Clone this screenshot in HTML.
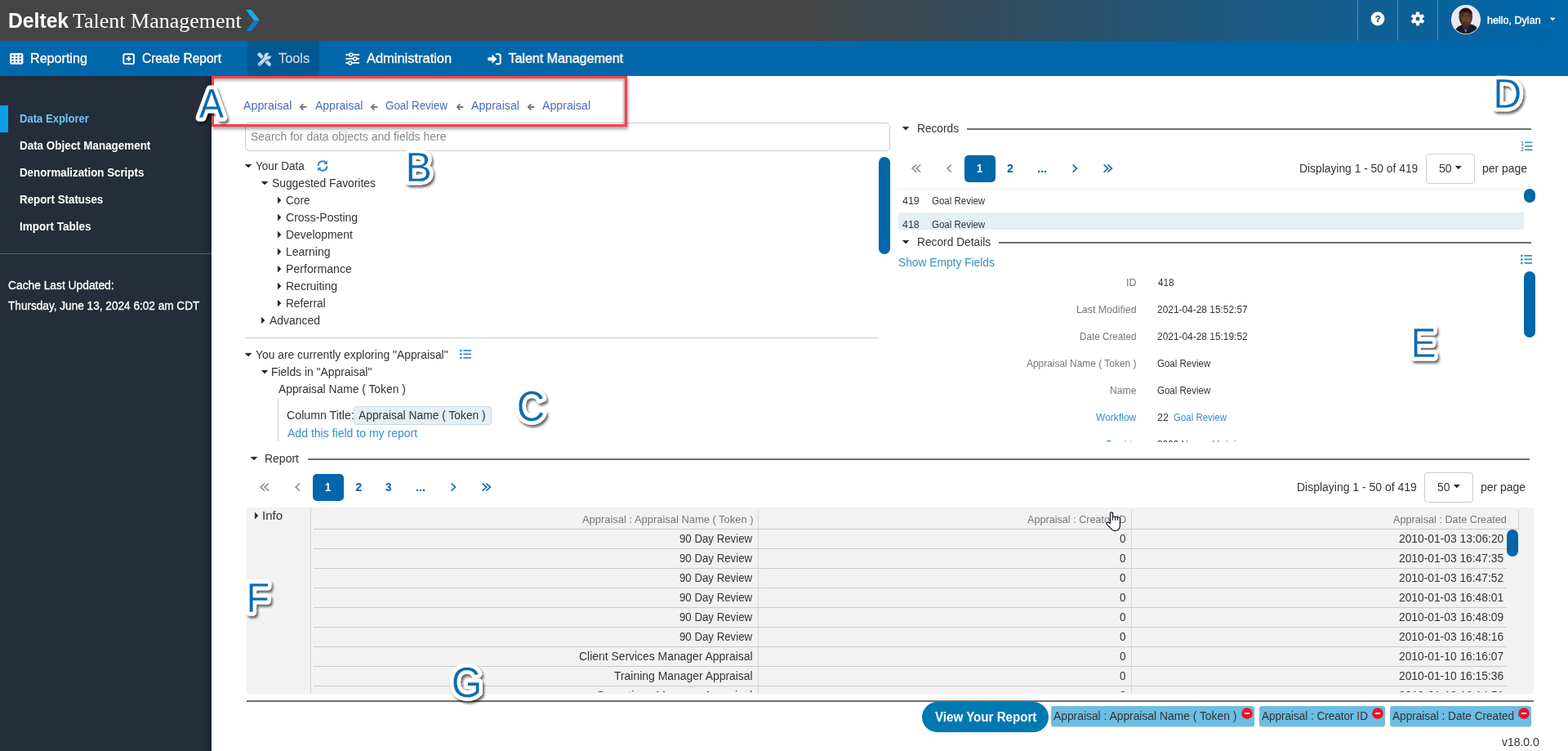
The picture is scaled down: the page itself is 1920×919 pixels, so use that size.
<!DOCTYPE html>
<html lang="en"><head><meta charset="utf-8"><title>Data Explorer</title>
<style>
html,body{margin:0;padding:0;background:#fff;}
body{width:1920px;height:919px;overflow:hidden;position:relative;font-family:'Liberation Sans',sans-serif;}
.b{position:absolute;display:block;box-sizing:border-box;}
.t{position:absolute;display:block;white-space:pre;transform-origin:0 50%;margin:0;padding:0;}
.clip{position:absolute;overflow:hidden;}
</style></head><body>

<header>
<div class="b" style="left:0px;top:0px;width:1920px;height:50px;background:linear-gradient(to right,#444 0,#444 51%,#0067ab 99%);"></div>
<span class="t" style="left:9.76px;top:6.10px;line-height:39px;font-size:26px;color:#fff;font-weight:700;font-family:'Liberation Sans', sans-serif;transform:scaleX(0.9494);">Deltek</span>
<span class="t" style="left:88.89px;top:6.90px;line-height:38px;font-size:25px;color:#fff;font-weight:400;font-family:'Liberation Serif', serif;transform:scaleX(1.0400);">Talent Management</span>
<svg class="b" style="left:301px;top:12px;" width="17" height="26" viewBox="0 0 17 26"><path d="M0 0 H7 L17 13 H10 Z" fill="#1ea8ee"/><path d="M10 13 H17 L7 26 H0 Z" fill="#1579c4"/></svg>
<div class="b" style="left:1662px;top:0px;width:1px;height:50px;background:rgba(255,255,255,.28);"></div>
<div class="b" style="left:1711px;top:0px;width:1px;height:50px;background:rgba(255,255,255,.28);"></div>
<div class="b" style="left:1760px;top:0px;width:1px;height:50px;background:rgba(255,255,255,.28);"></div>
<svg class="b" style="left:1678px;top:14px;" width="18" height="18" viewBox="0 0 18 18"><circle cx="9" cy="9" r="8.4" fill="#fff"/><text x="9" y="12.9" text-anchor="middle" font-family="'Liberation Sans',sans-serif" font-weight="700" font-size="11" fill="#17608f" stroke="#17608f" stroke-width="0.4">?</text></svg>
<svg class="b" style="left:1727px;top:14px;" width="18" height="18" viewBox="0 0 18 18"><g transform="translate(9 9)"><rect x="-2.1" y="-8.4" width="4.2" height="5" rx="0.8" fill="#fff" transform="rotate(0)"/><rect x="-2.1" y="-8.4" width="4.2" height="5" rx="0.8" fill="#fff" transform="rotate(60)"/><rect x="-2.1" y="-8.4" width="4.2" height="5" rx="0.8" fill="#fff" transform="rotate(120)"/><rect x="-2.1" y="-8.4" width="4.2" height="5" rx="0.8" fill="#fff" transform="rotate(180)"/><rect x="-2.1" y="-8.4" width="4.2" height="5" rx="0.8" fill="#fff" transform="rotate(240)"/><rect x="-2.1" y="-8.4" width="4.2" height="5" rx="0.8" fill="#fff" transform="rotate(300)"/><circle r="6" fill="#fff"/><circle r="2.5" fill="#145f98"/></g></svg>
<svg class="b" style="left:1777px;top:6px;" width="36" height="36" viewBox="0 0 36 36"><defs><clipPath id="avc"><circle cx="18" cy="18" r="17.2"/></clipPath></defs><circle cx="18" cy="18" r="18" fill="#f6f5fa"/><g clip-path="url(#avc)"><rect width="36" height="36" fill="#e9e7f0"/><path d="M4 36 C4.5 29 8 26 13 24.5 L18 30 L24 23.5 C30 25 33.5 28 34 36 Z" fill="#19191d"/><path d="M14.4 25.6 L17.6 34.5 L22.4 24.8 L20 30.4 L17.2 30.4 Z" fill="#5b84b3"/><path d="M12.6 20 H23.4 V25.4 L18 30.6 L12.6 25.6 Z" fill="#3a221b"/><ellipse cx="17.7" cy="14.6" rx="8.3" ry="11.2" fill="#4b2e25"/><path d="M9.5 12.6 C8.6 1.2 26.8 1.2 25.9 12.6 C24.6 7.2 10.8 7.2 9.5 12.6Z" fill="#1c1412"/><ellipse cx="18.4" cy="16.6" rx="5.6" ry="6.8" fill="#68412f"/><path d="M14.6 21.4 Q18 23.2 21.6 21.4" stroke="#2c1712" stroke-width="0.9" fill="none"/><path d="M13.4 13.2 H16.6 M19.6 13.2 H22.8" stroke="#22140f" stroke-width="1" fill="none"/></g></svg>
<span class="t" style="left:1821.41px;top:14.60px;line-height:20px;font-size:13.5px;color:#fff;font-weight:400;font-family:'Liberation Sans', sans-serif;transform:scaleX(0.9304);-webkit-text-stroke:0.4px #fff;">hello, Dylan</span>
<svg class="b" style="left:1896.6px;top:21.2px;" width="9" height="6" viewBox="0 0 9 6"><path d="M0.8 0.8 H7.6 L4.2 4.4 Z" fill="#fff"/></svg>
</header>
<nav>
<div class="b" style="left:0px;top:50px;width:1920px;height:43px;background:#0067ab;"></div>
<div class="b" style="left:303px;top:50px;width:88px;height:43px;background:#005893;"></div>
<svg class="b" style="left:12px;top:65.2px;" width="17" height="14" viewBox="0 0 17 14"><rect x="0" y="0" width="16.4" height="13.8" rx="1.8" fill="#fff"/><rect x="2.3" y="2.4" width="2.5" height="1.9" fill="#0067ab"/><rect x="6.9" y="2.4" width="2.5" height="1.9" fill="#0067ab"/><rect x="11.5" y="2.4" width="2.5" height="1.9" fill="#0067ab"/><rect x="2.3" y="5.9" width="2.5" height="1.9" fill="#0067ab"/><rect x="6.9" y="5.9" width="2.5" height="1.9" fill="#0067ab"/><rect x="11.5" y="5.9" width="2.5" height="1.9" fill="#0067ab"/><rect x="2.3" y="9.5" width="2.5" height="1.9" fill="#0067ab"/><rect x="6.9" y="9.5" width="2.5" height="1.9" fill="#0067ab"/><rect x="11.5" y="9.5" width="2.5" height="1.9" fill="#0067ab"/></svg>
<span class="t" style="left:36.94px;top:59.55px;line-height:24px;font-size:16px;color:#fff;font-weight:400;font-family:'Liberation Sans', sans-serif;transform:scaleX(1.0073);-webkit-text-stroke:0.35px #fff;text-shadow:0 1px 1px rgba(0,0,0,.35);">Reporting</span>
<svg class="b" style="left:150px;top:65px;" width="16" height="15" viewBox="0 0 16 15"><rect x="1.3" y="1.2" width="12.6" height="11.8" rx="1.6" fill="none" stroke="#fff" stroke-width="1.9"/><path d="M7.6 4.1 V10.1 M4.6 7.1 H10.6" stroke="#fff" stroke-width="2" fill="none"/></svg>
<span class="t" style="left:173.98px;top:59.55px;line-height:24px;font-size:16px;color:#fff;font-weight:400;font-family:'Liberation Sans', sans-serif;transform:scaleX(0.9644);-webkit-text-stroke:0.35px #fff;text-shadow:0 1px 1px rgba(0,0,0,.35);">Create Report</span>
<svg class="b" style="left:314.6px;top:63.6px;" width="18" height="17.4" viewBox="0 0 18 17.4"><path d="M2.6 2.6 L14.8 14.8" stroke="#c3d6e6" stroke-width="4.4" stroke-linecap="round" fill="none"/><path d="M2.9 14.6 L11.5 6" stroke="#005893" stroke-width="6.2" stroke-linecap="round" fill="none"/><circle cx="12.5" cy="4.8" r="5.2" fill="#005893"/><path d="M2.9 14.6 L11 6.5" stroke="#c3d6e6" stroke-width="4.2" stroke-linecap="round" fill="none"/><circle cx="12.5" cy="4.8" r="4.3" fill="#c3d6e6"/><path d="M12.1 5.2 L15.4 -0.6 L18.6 3.2 Z" fill="#005893"/><circle cx="3" cy="14.5" r="0.8" fill="#005893"/></svg>
<span class="t" style="left:341.24px;top:59.55px;line-height:24px;font-size:16px;color:#c3d6e6;font-weight:400;font-family:'Liberation Sans', sans-serif;transform:scaleX(1.0224);-webkit-text-stroke:0.35px #c3d6e6;text-shadow:0 1px 1px rgba(0,0,0,.35);">Tools</span>
<svg class="b" style="left:423px;top:63.8px;" width="18" height="16.5" viewBox="0 0 18 16.5"><g stroke="#fff" stroke-width="1.9" fill="none"><path d="M0.3 2.9 H17 M0.3 7.9 H17 M0.3 12.9 H17"/></g><circle cx="6.7" cy="2.9" r="2" fill="#0067ab" stroke="#fff" stroke-width="1.5"/><circle cx="11.7" cy="7.9" r="2" fill="#0067ab" stroke="#fff" stroke-width="1.5"/><circle cx="5.7" cy="12.9" r="2" fill="#0067ab" stroke="#fff" stroke-width="1.5"/></svg>
<span class="t" style="left:448.80px;top:59.55px;line-height:24px;font-size:16px;color:#fff;font-weight:400;font-family:'Liberation Sans', sans-serif;transform:scaleX(1.0271);-webkit-text-stroke:0.35px #fff;text-shadow:0 1px 1px rgba(0,0,0,.35);">Administration</span>
<svg class="b" style="left:596.6px;top:64.6px;" width="17" height="15" viewBox="0 0 17 15"><path d="M0.4 5.2 H5.4 V1.6 L11.6 7.2 L5.4 12.8 V9.2 H0.4 Z" fill="#fff"/><path d="M10.8 1.2 H13.4 Q15.7 1.2 15.7 3.5 V10.9 Q15.7 13.2 13.4 13.2 H10.8" fill="none" stroke="#fff" stroke-width="2" stroke-linecap="round"/></svg>
<span class="t" style="left:622.45px;top:59.55px;line-height:24px;font-size:16px;color:#fff;font-weight:400;font-family:'Liberation Sans', sans-serif;transform:scaleX(1.0000);-webkit-text-stroke:0.35px #fff;text-shadow:0 1px 1px rgba(0,0,0,.35);">Talent Management</span>
</nav>
<aside>
<div class="b" style="left:0px;top:93px;width:259px;height:826px;background:linear-gradient(to right,#252d3a 0,#252d3a 96%,#1d242f 100%);"></div>
<div class="b" style="left:0px;top:129px;width:10px;height:33px;background:#0d9ee8;"></div>
<span class="t" style="left:23.98px;top:135.05px;line-height:21px;font-size:14px;color:#6cc3f5;font-weight:700;font-family:'Liberation Sans', sans-serif;transform:scaleX(0.9326);">Data Explorer</span>
<span class="t" style="left:23.96px;top:167.70px;line-height:21px;font-size:14px;color:#fff;font-weight:700;font-family:'Liberation Sans', sans-serif;transform:scaleX(0.9584);">Data Object Management</span>
<span class="t" style="left:23.97px;top:200.60px;line-height:21px;font-size:14px;color:#fff;font-weight:700;font-family:'Liberation Sans', sans-serif;transform:scaleX(0.9502);">Denormalization Scripts</span>
<span class="t" style="left:23.87px;top:233.70px;line-height:21px;font-size:14px;color:#fff;font-weight:700;font-family:'Liberation Sans', sans-serif;transform:scaleX(0.9526);">Report Statuses</span>
<span class="t" style="left:23.86px;top:266.70px;line-height:21px;font-size:14px;color:#fff;font-weight:700;font-family:'Liberation Sans', sans-serif;transform:scaleX(0.9640);">Import Tables</span>
<div class="b" style="left:0px;top:310px;width:259px;height:1px;background:#5b626d;"></div>
<span class="t" style="left:9.55px;top:338.90px;line-height:21px;font-size:14px;color:#fff;font-weight:400;font-family:'Liberation Sans', sans-serif;transform:scaleX(0.9850);-webkit-text-stroke:0.3px #fff;">Cache Last Updated:</span>
<span class="t" style="left:9.99px;top:363.50px;line-height:21px;font-size:14px;color:#fff;font-weight:400;font-family:'Liberation Sans', sans-serif;transform:scaleX(0.9725);-webkit-text-stroke:0.3px #fff;">Thursday, June 13, 2024 6:02 am CDT</span>
</aside>
<main>
<div class="b" style="left:300px;top:150px;width:790px;height:35px;border:1px solid #c4cbd2;border-radius:5px;background:#fff;"></div>
<span class="t" style="left:306.86px;top:156.85px;line-height:21px;font-size:14px;color:#8a8a8a;font-weight:400;font-family:'Liberation Sans', sans-serif;transform:scaleX(0.9988);">Search for data objects and fields here</span>
<div class="b" style="left:259px;top:93px;width:509px;height:62px;border:3px solid #f94045;box-shadow:1px 3px 4px rgba(0,0,0,.36), inset -2px 3px 3px rgba(0,0,0,.27);"></div>
<span class="t" style="left:298.10px;top:118.70px;line-height:21px;font-size:14px;color:#4a6cb8;font-weight:400;font-family:'Liberation Sans', sans-serif;transform:scaleX(1.0167);">Appraisal</span>
<span class="t" style="left:385.50px;top:118.70px;line-height:21px;font-size:14px;color:#4a6cb8;font-weight:400;font-family:'Liberation Sans', sans-serif;transform:scaleX(0.9993);">Appraisal</span>
<span class="t" style="left:472.07px;top:118.70px;line-height:21px;font-size:14px;color:#4a6cb8;font-weight:400;font-family:'Liberation Sans', sans-serif;transform:scaleX(0.9559);">Goal Review</span>
<span class="t" style="left:577.10px;top:118.70px;line-height:21px;font-size:14px;color:#4a6cb8;font-weight:400;font-family:'Liberation Sans', sans-serif;transform:scaleX(1.0097);">Appraisal</span>
<span class="t" style="left:664.10px;top:118.70px;line-height:21px;font-size:14px;color:#4a6cb8;font-weight:400;font-family:'Liberation Sans', sans-serif;transform:scaleX(1.0132);">Appraisal</span>
<svg class="b" style="left:366px;top:125.80000000000001px;" width="11" height="10" viewBox="0 0 11 10"><path d="M4.9 1.9 L1.9 5 L4.9 8.1 M2.2 5 H8.6" fill="none" stroke="#777" stroke-width="1.9" stroke-linecap="round" stroke-linejoin="round"/></svg>
<svg class="b" style="left:453.4px;top:125.80000000000001px;" width="11" height="10" viewBox="0 0 11 10"><path d="M4.9 1.9 L1.9 5 L4.9 8.1 M2.2 5 H8.6" fill="none" stroke="#777" stroke-width="1.9" stroke-linecap="round" stroke-linejoin="round"/></svg>
<svg class="b" style="left:557.8px;top:125.80000000000001px;" width="11" height="10" viewBox="0 0 11 10"><path d="M4.9 1.9 L1.9 5 L4.9 8.1 M2.2 5 H8.6" fill="none" stroke="#777" stroke-width="1.9" stroke-linecap="round" stroke-linejoin="round"/></svg>
<svg class="b" style="left:644.7px;top:125.80000000000001px;" width="11" height="10" viewBox="0 0 11 10"><path d="M4.9 1.9 L1.9 5 L4.9 8.1 M2.2 5 H8.6" fill="none" stroke="#777" stroke-width="1.9" stroke-linecap="round" stroke-linejoin="round"/></svg>
<svg class="b" style="left:299px;top:200.04999999999998px;" width="10.2" height="6.3" viewBox="0 0 10.2 6.3"><path d="M1.3 1.3 H8.899999999999999 L5.1 5.0 Z" fill="#222" stroke="#222" stroke-width="0.6" stroke-linejoin="round"/></svg>
<span class="t" style="left:313.39px;top:192.80px;line-height:21px;font-size:14px;color:#333;font-weight:400;font-family:'Liberation Sans', sans-serif;transform:scaleX(0.9689);">Your Data</span>
<svg class="b" style="left:388px;top:196px;" width="14" height="14" viewBox="0 0 14 14"><g fill="none" stroke="#2d8cc6" stroke-width="1.9" stroke-linecap="round"><path d="M1.6 6 A5.4 5.4 0 0 1 11.2 3.4"/><path d="M12.4 8 A5.4 5.4 0 0 1 2.8 10.6"/></g><path d="M12.8 0.6 V5 H8.4 Z" fill="#2d8cc6"/><path d="M1.2 13.4 V9 H5.6 Z" fill="#2d8cc6"/></svg>
<svg class="b" style="left:319px;top:221.04999999999998px;" width="10.2" height="6.3" viewBox="0 0 10.2 6.3"><path d="M1.3 1.3 H8.899999999999999 L5.1 5.0 Z" fill="#222" stroke="#222" stroke-width="0.6" stroke-linejoin="round"/></svg>
<span class="t" style="left:332.87px;top:213.80px;line-height:21px;font-size:14px;color:#333;font-weight:400;font-family:'Liberation Sans', sans-serif;transform:scaleX(0.9880);">Suggested Favorites</span>
<svg class="b" style="left:338.9px;top:239.9px;" width="6.3" height="10.2" viewBox="0 0 6.3 10.2"><path d="M1.3 1.3 V8.899999999999999 L5.0 5.1 Z" fill="#222" stroke="#222" stroke-width="0.6" stroke-linejoin="round"/></svg>
<span class="t" style="left:350.06px;top:234.80px;line-height:21px;font-size:14px;color:#333;font-weight:400;font-family:'Liberation Sans', sans-serif;transform:scaleX(0.9718);">Core</span>
<svg class="b" style="left:338.9px;top:260.9px;" width="6.3" height="10.2" viewBox="0 0 6.3 10.2"><path d="M1.3 1.3 V8.899999999999999 L5.0 5.1 Z" fill="#222" stroke="#222" stroke-width="0.6" stroke-linejoin="round"/></svg>
<span class="t" style="left:350.04px;top:255.80px;line-height:21px;font-size:14px;color:#333;font-weight:400;font-family:'Liberation Sans', sans-serif;transform:scaleX(1.0026);">Cross-Posting</span>
<svg class="b" style="left:338.9px;top:281.9px;" width="6.3" height="10.2" viewBox="0 0 6.3 10.2"><path d="M1.3 1.3 V8.899999999999999 L5.0 5.1 Z" fill="#222" stroke="#222" stroke-width="0.6" stroke-linejoin="round"/></svg>
<span class="t" style="left:349.61px;top:276.80px;line-height:21px;font-size:14px;color:#333;font-weight:400;font-family:'Liberation Sans', sans-serif;transform:scaleX(0.9921);">Development</span>
<svg class="b" style="left:338.9px;top:302.9px;" width="6.3" height="10.2" viewBox="0 0 6.3 10.2"><path d="M1.3 1.3 V8.899999999999999 L5.0 5.1 Z" fill="#222" stroke="#222" stroke-width="0.6" stroke-linejoin="round"/></svg>
<span class="t" style="left:349.61px;top:297.80px;line-height:21px;font-size:14px;color:#333;font-weight:400;font-family:'Liberation Sans', sans-serif;transform:scaleX(1.0006);">Learning</span>
<svg class="b" style="left:338.9px;top:323.9px;" width="6.3" height="10.2" viewBox="0 0 6.3 10.2"><path d="M1.3 1.3 V8.899999999999999 L5.0 5.1 Z" fill="#222" stroke="#222" stroke-width="0.6" stroke-linejoin="round"/></svg>
<span class="t" style="left:349.60px;top:318.80px;line-height:21px;font-size:14px;color:#333;font-weight:400;font-family:'Liberation Sans', sans-serif;transform:scaleX(1.0081);">Performance</span>
<svg class="b" style="left:338.9px;top:344.9px;" width="6.3" height="10.2" viewBox="0 0 6.3 10.2"><path d="M1.3 1.3 V8.899999999999999 L5.0 5.1 Z" fill="#222" stroke="#222" stroke-width="0.6" stroke-linejoin="round"/></svg>
<span class="t" style="left:349.61px;top:339.80px;line-height:21px;font-size:14px;color:#333;font-weight:400;font-family:'Liberation Sans', sans-serif;transform:scaleX(0.9996);">Recruiting</span>
<svg class="b" style="left:338.9px;top:365.9px;" width="6.3" height="10.2" viewBox="0 0 6.3 10.2"><path d="M1.3 1.3 V8.899999999999999 L5.0 5.1 Z" fill="#222" stroke="#222" stroke-width="0.6" stroke-linejoin="round"/></svg>
<span class="t" style="left:349.63px;top:360.80px;line-height:21px;font-size:14px;color:#333;font-weight:400;font-family:'Liberation Sans', sans-serif;transform:scaleX(0.9754);">Referral</span>
<svg class="b" style="left:318.9px;top:386.9px;" width="6.3" height="10.2" viewBox="0 0 6.3 10.2"><path d="M1.3 1.3 V8.899999999999999 L5.0 5.1 Z" fill="#222" stroke="#222" stroke-width="0.6" stroke-linejoin="round"/></svg>
<span class="t" style="left:330.30px;top:381.80px;line-height:21px;font-size:14px;color:#333;font-weight:400;font-family:'Liberation Sans', sans-serif;transform:scaleX(0.9938);">Advanced</span>
<div class="b" style="left:300px;top:413px;width:776px;height:1px;background:#ccc;"></div>
<svg class="b" style="left:299px;top:431.05px;" width="10.2" height="6.3" viewBox="0 0 10.2 6.3"><path d="M1.3 1.3 H8.899999999999999 L5.1 5.0 Z" fill="#222" stroke="#222" stroke-width="0.6" stroke-linejoin="round"/></svg>
<span class="t" style="left:313.28px;top:423.80px;line-height:21px;font-size:14px;color:#333;font-weight:400;font-family:'Liberation Sans', sans-serif;transform:scaleX(0.9890);">You are currently exploring "Appraisal"</span>
<svg class="b" style="left:562.6px;top:427.3px;" width="15" height="13" viewBox="0 0 15 13"><rect x="0" y="0.7" width="2.5" height="2.5" rx="0.5" fill="#388fc8"/><rect x="4.2" y="1.1" width="10" height="1.7" rx="0.8" fill="#388fc8"/><rect x="0" y="5.2" width="2.5" height="2.5" rx="0.5" fill="#388fc8"/><rect x="4.2" y="5.6" width="10" height="1.7" rx="0.8" fill="#388fc8"/><rect x="0" y="9.7" width="2.5" height="2.5" rx="0.5" fill="#388fc8"/><rect x="4.2" y="10.1" width="10" height="1.7" rx="0.8" fill="#388fc8"/></svg>
<svg class="b" style="left:319px;top:452.05px;" width="10.2" height="6.3" viewBox="0 0 10.2 6.3"><path d="M1.3 1.3 H8.899999999999999 L5.1 5.0 Z" fill="#222" stroke="#222" stroke-width="0.6" stroke-linejoin="round"/></svg>
<span class="t" style="left:331.91px;top:444.80px;line-height:21px;font-size:14px;color:#333;font-weight:400;font-family:'Liberation Sans', sans-serif;transform:scaleX(0.9924);">Fields in "Appraisal"</span>
<span class="t" style="left:340.50px;top:465.80px;line-height:21px;font-size:14px;color:#333;font-weight:400;font-family:'Liberation Sans', sans-serif;transform:scaleX(0.9880);">Appraisal Name ( Token )</span>
<div class="b" style="left:340px;top:487px;width:1px;height:53px;background:#ccc;"></div>
<span class="t" style="left:350.73px;top:497.80px;line-height:21px;font-size:14px;color:#333;font-weight:400;font-family:'Liberation Sans', sans-serif;transform:scaleX(1.0134);">Column Title:</span>
<div class="b" style="left:433px;top:497px;width:169px;height:23px;background:#e4eff7;border:1px solid #c9d8e3;border-radius:3px;"></div>
<span class="t" style="left:439.40px;top:497.80px;line-height:21px;font-size:14px;color:#333;font-weight:400;font-family:'Liberation Sans', sans-serif;transform:scaleX(0.9875);">Appraisal Name ( Token )</span>
<span class="t" style="left:352.40px;top:519.80px;line-height:21px;font-size:14px;color:#388fc8;font-weight:400;font-family:'Liberation Sans', sans-serif;transform:scaleX(1.0029);">Add this field to my report</span>
<div class="b" style="left:1076px;top:192px;width:14px;height:119px;background:#0067ab;border-radius:7px;"></div>
<svg class="b" style="left:1103.8px;top:153.95px;" width="10.2" height="6.3" viewBox="0 0 10.2 6.3"><path d="M1.3 1.3 H8.899999999999999 L5.1 5.0 Z" fill="#222" stroke="#222" stroke-width="0.6" stroke-linejoin="round"/></svg>
<span class="t" style="left:1122.63px;top:146.90px;line-height:21px;font-size:14px;color:#333;font-weight:400;font-family:'Liberation Sans', sans-serif;transform:scaleX(0.9779);">Records</span>
<div class="b" style="left:1184px;top:157px;width:691px;height:2px;background:#6e6e6e;"></div>
<svg class="b" style="left:1862px;top:172.2px;" width="15" height="13" viewBox="0 0 15 13"><rect x="5" y="1.4000000000000001" width="9.6" height="1.7" rx="0.8" fill="#388fc8"/><rect x="5" y="5.999999999999999" width="9.6" height="1.7" rx="0.8" fill="#388fc8"/><rect x="5" y="10.6" width="9.6" height="1.7" rx="0.8" fill="#388fc8"/><text x="0" y="5.6" font-family="'Liberation Sans',sans-serif" font-weight="700" font-size="7" fill="#388fc8">1</text><text x="0" y="12.6" font-family="'Liberation Sans',sans-serif" font-weight="700" font-size="7" fill="#388fc8">2</text></svg>
<svg class="b" style="left:1113.8px;top:198.70000000000002px;" width="15.700000000000045" height="14.2" viewBox="0 0 15.700000000000045 14.2"><path d="M8.20 2.48 L3.10 7.10 L8.20 11.72 M13.10 2.48 L8.00 7.10 L13.10 11.72" fill="none" stroke="#8f8f8f" stroke-width="1.6" stroke-linecap="butt" stroke-linejoin="miter"/></svg>
<svg class="b" style="left:1156.8px;top:198.70000000000002px;" width="10.5" height="14.2" viewBox="0 0 10.5 14.2"><path d="M7.90 2.48 L3.10 7.10 L7.90 11.72" fill="none" stroke="#8f8f8f" stroke-width="1.6" stroke-linecap="butt" stroke-linejoin="miter"/></svg>
<div class="b" style="left:1181.0px;top:190.0px;width:38px;height:33px;background:#0067ab;border-radius:5px;"></div>
<span class="t" style="left:1196.01px;top:195.80px;line-height:21px;font-size:14px;color:#fff;font-weight:700;font-family:'Liberation Sans', sans-serif;transform:scaleX(0.8990);">1</span>
<span class="t" style="left:1233.06px;top:195.80px;line-height:21px;font-size:14px;color:#0067ab;font-weight:700;font-family:'Liberation Sans', sans-serif;transform:scaleX(1.0000);">2</span>
<span class="t" style="left:1269.89px;top:195.80px;line-height:21px;font-size:14px;color:#0067ab;font-weight:700;font-family:'Liberation Sans', sans-serif;transform:scaleX(1.0435);">...</span>
<svg class="b" style="left:1310.7px;top:198.70000000000002px;" width="10.5" height="14.2" viewBox="0 0 10.5 14.2"><path d="M2.60 2.48 L7.40 7.10 L2.60 11.72" fill="none" stroke="#0067ab" stroke-width="1.6" stroke-linecap="butt" stroke-linejoin="miter"/></svg>
<svg class="b" style="left:1348.7px;top:198.70000000000002px;" width="15.5" height="14.2" viewBox="0 0 15.5 14.2"><path d="M2.60 2.48 L7.70 7.10 L2.60 11.72 M7.30 2.48 L12.40 7.10 L7.30 11.72" fill="none" stroke="#0067ab" stroke-width="1.6" stroke-linecap="butt" stroke-linejoin="miter"/></svg>
<span class="t" style="left:1591.32px;top:195.80px;line-height:21px;font-size:14px;color:#333;font-weight:400;font-family:'Liberation Sans', sans-serif;transform:scaleX(0.9876);">Displaying 1 - 50 of 419</span>
<div class="b" style="left:1746px;top:188px;width:60px;height:37px;border:1px solid #ccc;border-radius:4px;background:#fff;"></div>
<span class="t" style="left:1761.66px;top:195.80px;line-height:21px;font-size:14px;color:#333;font-weight:400;font-family:'Liberation Sans', sans-serif;transform:scaleX(1.0077);">50</span>
<svg class="b" style="left:1781.2px;top:201.5px;" width="9.6" height="6.2" viewBox="0 0 9.6 6.2"><path d="M1.3 1.3 H8.299999999999999 L4.8 4.9 Z" fill="#222" stroke="#222" stroke-width="0.6" stroke-linejoin="round"/></svg>
<span class="t" style="left:1815.13px;top:195.80px;line-height:21px;font-size:14px;color:#333;font-weight:400;font-family:'Liberation Sans', sans-serif;transform:scaleX(0.9977);">per page</span>
<div class="b" style="left:1100px;top:231px;width:766px;height:1px;background:#eee;"></div>
<span class="t" style="left:1104.74px;top:236.70px;line-height:18px;font-size:12px;color:#333;font-weight:400;font-family:'Liberation Sans', sans-serif;transform:scaleX(1.0339);">419</span>
<span class="t" style="left:1141.03px;top:236.70px;line-height:18px;font-size:12px;color:#333;font-weight:400;font-family:'Liberation Sans', sans-serif;transform:scaleX(0.9576);">Goal Review</span>
<div class="b" style="left:1100px;top:260px;width:766px;height:21px;background:#e4eff6;"></div>
<span class="t" style="left:1104.74px;top:265.50px;line-height:18px;font-size:12px;color:#333;font-weight:400;font-family:'Liberation Sans', sans-serif;transform:scaleX(1.0312);">418</span>
<span class="t" style="left:1141.03px;top:265.50px;line-height:18px;font-size:12px;color:#333;font-weight:400;font-family:'Liberation Sans', sans-serif;transform:scaleX(0.9576);">Goal Review</span>
<div class="b" style="left:1100px;top:281px;width:780px;height:8px;background:#fff;"></div>
<div class="b" style="left:1866px;top:231px;width:14px;height:17px;background:#0067ab;border-radius:7px;"></div>
<svg class="b" style="left:1103.8px;top:292.95000000000005px;" width="10.2" height="6.3" viewBox="0 0 10.2 6.3"><path d="M1.3 1.3 H8.899999999999999 L5.1 5.0 Z" fill="#222" stroke="#222" stroke-width="0.6" stroke-linejoin="round"/></svg>
<span class="t" style="left:1122.63px;top:285.80px;line-height:21px;font-size:14px;color:#333;font-weight:400;font-family:'Liberation Sans', sans-serif;transform:scaleX(0.9825);">Record Details</span>
<div class="b" style="left:1223px;top:296px;width:652px;height:2px;background:#6e6e6e;"></div>
<span class="t" style="left:1099.87px;top:310.70px;line-height:21px;font-size:14px;color:#388fc8;font-weight:400;font-family:'Liberation Sans', sans-serif;transform:scaleX(0.9836);">Show Empty Fields</span>
<svg class="b" style="left:1862.2px;top:311.2px;" width="15" height="13" viewBox="0 0 15 13"><rect x="0" y="0.7" width="2.5" height="2.5" rx="0.5" fill="#388fc8"/><rect x="4.2" y="1.1" width="10" height="1.7" rx="0.8" fill="#388fc8"/><rect x="0" y="5.2" width="2.5" height="2.5" rx="0.5" fill="#388fc8"/><rect x="4.2" y="5.6" width="10" height="1.7" rx="0.8" fill="#388fc8"/><rect x="0" y="9.7" width="2.5" height="2.5" rx="0.5" fill="#388fc8"/><rect x="4.2" y="10.1" width="10" height="1.7" rx="0.8" fill="#388fc8"/></svg>
<div class="b" style="left:1866px;top:332px;width:14px;height:81px;background:#0067ab;border-radius:7px;"></div>
<span class="t" style="left:1379.05px;top:336.90px;line-height:18px;font-size:12px;color:#777;font-weight:400;font-family:'Liberation Sans', sans-serif;transform:scaleX(1.0451);">ID</span>
<span class="t" style="left:1418.36px;top:336.90px;line-height:18px;font-size:12px;color:#333;font-weight:400;font-family:'Liberation Sans', sans-serif;transform:scaleX(0.9773);">418</span>
<span class="t" style="left:1317.62px;top:369.90px;line-height:18px;font-size:12px;color:#777;font-weight:400;font-family:'Liberation Sans', sans-serif;transform:scaleX(1.0301);">Last Modified</span>
<span class="t" style="left:1417.00px;top:369.90px;line-height:18px;font-size:12px;color:#333;font-weight:400;font-family:'Liberation Sans', sans-serif;transform:scaleX(0.9932);">2021-04-28 15:52:57</span>
<span class="t" style="left:1322.37px;top:402.90px;line-height:18px;font-size:12px;color:#777;font-weight:400;font-family:'Liberation Sans', sans-serif;transform:scaleX(0.9742);">Date Created</span>
<span class="t" style="left:1417.00px;top:402.90px;line-height:18px;font-size:12px;color:#333;font-weight:400;font-family:'Liberation Sans', sans-serif;transform:scaleX(0.9932);">2021-04-28 15:19:52</span>
<span class="t" style="left:1257.00px;top:435.90px;line-height:18px;font-size:12px;color:#777;font-weight:400;font-family:'Liberation Sans', sans-serif;transform:scaleX(0.9949);">Appraisal Name ( Token )</span>
<span class="t" style="left:1417.02px;top:435.90px;line-height:18px;font-size:12px;color:#333;font-weight:400;font-family:'Liberation Sans', sans-serif;transform:scaleX(0.9591);">Goal Review</span>
<span class="t" style="left:1359.04px;top:468.90px;line-height:18px;font-size:12px;color:#777;font-weight:400;font-family:'Liberation Sans', sans-serif;transform:scaleX(1.0152);">Name</span>
<span class="t" style="left:1417.02px;top:468.90px;line-height:18px;font-size:12px;color:#333;font-weight:400;font-family:'Liberation Sans', sans-serif;transform:scaleX(0.9591);">Goal Review</span>
<span class="t" style="left:1341.65px;top:501.90px;line-height:18px;font-size:12px;color:#388fc8;font-weight:400;font-family:'Liberation Sans', sans-serif;transform:scaleX(1.0040);">Workflow</span>
<span class="t" style="left:1417.07px;top:501.90px;line-height:18px;font-size:12px;color:#333;font-weight:400;font-family:'Liberation Sans', sans-serif;transform:scaleX(1.0514);">22</span>
<span class="t" style="left:1436.93px;top:501.90px;line-height:18px;font-size:12px;color:#388fc8;font-weight:400;font-family:'Liberation Sans', sans-serif;transform:scaleX(0.9546);">Goal Review</span>
<div class="clip" style="left:1100px;top:530px;width:760px;height:11px;">
<span class="t" style="left:254.81px;top:4.90px;line-height:18px;font-size:12px;color:#388fc8;font-weight:400;font-family:'Liberation Sans', sans-serif;transform:scaleX(0.7513);">Template</span>
<span class="t" style="left:317.16px;top:4.90px;line-height:18px;font-size:12px;color:#333;font-weight:400;font-family:'Liberation Sans', sans-serif;transform:scaleX(0.9837);">3000</span>
<span class="t" style="left:345.97px;top:4.90px;line-height:18px;font-size:12px;color:#388fc8;font-weight:400;font-family:'Liberation Sans', sans-serif;transform:scaleX(1.0793);">Name Helein</span>
</div>
<svg class="b" style="left:306px;top:558.0500000000001px;" width="10.2" height="6.3" viewBox="0 0 10.2 6.3"><path d="M1.3 1.3 H8.899999999999999 L5.1 5.0 Z" fill="#222" stroke="#222" stroke-width="0.6" stroke-linejoin="round"/></svg>
<span class="t" style="left:324.21px;top:550.80px;line-height:21px;font-size:14px;color:#333;font-weight:400;font-family:'Liberation Sans', sans-serif;transform:scaleX(0.9982);">Report</span>
<div class="b" style="left:377px;top:561px;width:1496px;height:2px;background:#6e6e6e;"></div>
<svg class="b" style="left:315.9px;top:588.6999999999999px;" width="15.699999999999989" height="14.2" viewBox="0 0 15.699999999999989 14.2"><path d="M8.20 2.48 L3.10 7.10 L8.20 11.72 M13.10 2.48 L8.00 7.10 L13.10 11.72" fill="none" stroke="#8f8f8f" stroke-width="1.6" stroke-linecap="butt" stroke-linejoin="miter"/></svg>
<svg class="b" style="left:358.9px;top:588.6999999999999px;" width="10.5" height="14.2" viewBox="0 0 10.5 14.2"><path d="M7.90 2.48 L3.10 7.10 L7.90 11.72" fill="none" stroke="#8f8f8f" stroke-width="1.6" stroke-linecap="butt" stroke-linejoin="miter"/></svg>
<div class="b" style="left:383.09999999999997px;top:580.0px;width:38px;height:33px;background:#0067ab;border-radius:5px;"></div>
<span class="t" style="left:398.11px;top:585.80px;line-height:21px;font-size:14px;color:#fff;font-weight:700;font-family:'Liberation Sans', sans-serif;transform:scaleX(0.8990);">1</span>
<span class="t" style="left:435.16px;top:585.80px;line-height:21px;font-size:14px;color:#0067ab;font-weight:700;font-family:'Liberation Sans', sans-serif;transform:scaleX(1.0000);">2</span>
<span class="t" style="left:472.39px;top:585.80px;line-height:21px;font-size:14px;color:#0067ab;font-weight:700;font-family:'Liberation Sans', sans-serif;transform:scaleX(0.9697);">3</span>
<span class="t" style="left:508.99px;top:585.80px;line-height:21px;font-size:14px;color:#0067ab;font-weight:700;font-family:'Liberation Sans', sans-serif;transform:scaleX(1.0435);">...</span>
<svg class="b" style="left:549.8px;top:588.6999999999999px;" width="10.5" height="14.2" viewBox="0 0 10.5 14.2"><path d="M2.60 2.48 L7.40 7.10 L2.60 11.72" fill="none" stroke="#0067ab" stroke-width="1.6" stroke-linecap="butt" stroke-linejoin="miter"/></svg>
<svg class="b" style="left:587.8px;top:588.6999999999999px;" width="15.5" height="14.2" viewBox="0 0 15.5 14.2"><path d="M2.60 2.48 L7.70 7.10 L2.60 11.72 M7.30 2.48 L12.40 7.10 L7.30 11.72" fill="none" stroke="#0067ab" stroke-width="1.6" stroke-linecap="butt" stroke-linejoin="miter"/></svg>
<span class="t" style="left:1588.11px;top:585.80px;line-height:21px;font-size:14px;color:#333;font-weight:400;font-family:'Liberation Sans', sans-serif;transform:scaleX(0.9984);">Displaying 1 - 50 of 419</span>
<div class="b" style="left:1744px;top:578px;width:60px;height:37px;border:1px solid #ccc;border-radius:4px;background:#fff;"></div>
<span class="t" style="left:1759.67px;top:585.80px;line-height:21px;font-size:14px;color:#333;font-weight:400;font-family:'Liberation Sans', sans-serif;transform:scaleX(0.9901);">50</span>
<svg class="b" style="left:1779.3px;top:591.5px;" width="9.6" height="6.2" viewBox="0 0 9.6 6.2"><path d="M1.3 1.3 H8.299999999999999 L4.8 4.9 Z" fill="#222" stroke="#222" stroke-width="0.6" stroke-linejoin="round"/></svg>
<span class="t" style="left:1813.33px;top:585.80px;line-height:21px;font-size:14px;color:#333;font-weight:400;font-family:'Liberation Sans', sans-serif;transform:scaleX(0.9958);">per page</span>
<div class="b" style="left:302px;top:621px;width:1576px;height:228px;background:#f2f2f2;border-radius:0 4px 0 0;"></div>
<svg class="b" style="left:311.1px;top:626.1px;" width="6.3" height="10.2" viewBox="0 0 6.3 10.2"><path d="M1.3 1.3 V8.899999999999999 L5.0 5.1 Z" fill="#222" stroke="#222" stroke-width="0.6" stroke-linejoin="round"/></svg>
<span class="t" style="left:321.33px;top:620.90px;line-height:21px;font-size:14px;color:#333;font-weight:400;font-family:'Liberation Sans', sans-serif;transform:scaleX(1.0742);">Info</span>
<div class="b" style="left:380px;top:621px;width:1px;height:228px;background:#d4d4d4;"></div>
<div class="b" style="left:928px;top:624px;width:1px;height:225px;background:#d8d8d8;"></div>
<div class="b" style="left:1385px;top:624px;width:1px;height:225px;background:#d8d8d8;"></div>
<div class="b" style="left:1859px;top:624px;width:1px;height:24px;background:#d4d4d4;"></div>
<div class="b" style="left:384px;top:647px;width:1476px;height:1px;background:#cbcbcb;"></div>
<div class="b" style="left:384px;top:671px;width:1461px;height:1px;background:#cbcbcb;"></div>
<div class="b" style="left:384px;top:695px;width:1461px;height:1px;background:#cbcbcb;"></div>
<div class="b" style="left:384px;top:719px;width:1461px;height:1px;background:#cbcbcb;"></div>
<div class="b" style="left:384px;top:743px;width:1461px;height:1px;background:#cbcbcb;"></div>
<div class="b" style="left:384px;top:767px;width:1461px;height:1px;background:#cbcbcb;"></div>
<div class="b" style="left:384px;top:791px;width:1461px;height:1px;background:#cbcbcb;"></div>
<div class="b" style="left:384px;top:815px;width:1461px;height:1px;background:#cbcbcb;"></div>
<div class="b" style="left:384px;top:839px;width:1461px;height:1px;background:#cbcbcb;"></div>
<span class="t" style="left:713.30px;top:626.00px;line-height:20px;font-size:13px;color:#777;font-weight:400;font-family:'Liberation Sans', sans-serif;transform:scaleX(0.9940);">Appraisal : Appraisal Name ( Token )</span>
<span class="t" style="left:1257.60px;top:626.00px;line-height:20px;font-size:13px;color:#777;font-weight:400;font-family:'Liberation Sans', sans-serif;transform:scaleX(0.9712);">Appraisal : Creator ID</span>
<span class="t" style="left:1705.60px;top:626.00px;line-height:20px;font-size:13px;color:#777;font-weight:400;font-family:'Liberation Sans', sans-serif;transform:scaleX(0.9754);">Appraisal : Date Created</span>
<span class="t" style="left:832.48px;top:648.90px;line-height:21px;font-size:14px;color:#333;font-weight:400;font-family:'Liberation Sans', sans-serif;transform:scaleX(0.9463);">90 Day Review</span>
<span class="t" style="left:1370.58px;top:648.90px;line-height:21px;font-size:14px;color:#333;font-weight:400;font-family:'Liberation Sans', sans-serif;transform:scaleX(0.9657);">0</span>
<span class="t" style="left:1712.65px;top:648.90px;line-height:21px;font-size:14px;color:#333;font-weight:400;font-family:'Liberation Sans', sans-serif;transform:scaleX(0.9869);">2010-01-03 13:06:20</span>
<span class="t" style="left:832.48px;top:672.90px;line-height:21px;font-size:14px;color:#333;font-weight:400;font-family:'Liberation Sans', sans-serif;transform:scaleX(0.9463);">90 Day Review</span>
<span class="t" style="left:1370.58px;top:672.90px;line-height:21px;font-size:14px;color:#333;font-weight:400;font-family:'Liberation Sans', sans-serif;transform:scaleX(0.9657);">0</span>
<span class="t" style="left:1712.65px;top:672.90px;line-height:21px;font-size:14px;color:#333;font-weight:400;font-family:'Liberation Sans', sans-serif;transform:scaleX(0.9853);">2010-01-03 16:47:35</span>
<span class="t" style="left:832.48px;top:696.90px;line-height:21px;font-size:14px;color:#333;font-weight:400;font-family:'Liberation Sans', sans-serif;transform:scaleX(0.9463);">90 Day Review</span>
<span class="t" style="left:1370.58px;top:696.90px;line-height:21px;font-size:14px;color:#333;font-weight:400;font-family:'Liberation Sans', sans-serif;transform:scaleX(0.9657);">0</span>
<span class="t" style="left:1712.65px;top:696.90px;line-height:21px;font-size:14px;color:#333;font-weight:400;font-family:'Liberation Sans', sans-serif;transform:scaleX(0.9853);">2010-01-03 16:47:52</span>
<span class="t" style="left:832.48px;top:720.90px;line-height:21px;font-size:14px;color:#333;font-weight:400;font-family:'Liberation Sans', sans-serif;transform:scaleX(0.9463);">90 Day Review</span>
<span class="t" style="left:1370.58px;top:720.90px;line-height:21px;font-size:14px;color:#333;font-weight:400;font-family:'Liberation Sans', sans-serif;transform:scaleX(0.9657);">0</span>
<span class="t" style="left:1712.65px;top:720.90px;line-height:21px;font-size:14px;color:#333;font-weight:400;font-family:'Liberation Sans', sans-serif;transform:scaleX(0.9853);">2010-01-03 16:48:01</span>
<span class="t" style="left:832.48px;top:744.90px;line-height:21px;font-size:14px;color:#333;font-weight:400;font-family:'Liberation Sans', sans-serif;transform:scaleX(0.9463);">90 Day Review</span>
<span class="t" style="left:1370.58px;top:744.90px;line-height:21px;font-size:14px;color:#333;font-weight:400;font-family:'Liberation Sans', sans-serif;transform:scaleX(0.9657);">0</span>
<span class="t" style="left:1712.65px;top:744.90px;line-height:21px;font-size:14px;color:#333;font-weight:400;font-family:'Liberation Sans', sans-serif;transform:scaleX(0.9853);">2010-01-03 16:48:09</span>
<span class="t" style="left:832.48px;top:768.90px;line-height:21px;font-size:14px;color:#333;font-weight:400;font-family:'Liberation Sans', sans-serif;transform:scaleX(0.9463);">90 Day Review</span>
<span class="t" style="left:1370.58px;top:768.90px;line-height:21px;font-size:14px;color:#333;font-weight:400;font-family:'Liberation Sans', sans-serif;transform:scaleX(0.9657);">0</span>
<span class="t" style="left:1712.65px;top:768.90px;line-height:21px;font-size:14px;color:#333;font-weight:400;font-family:'Liberation Sans', sans-serif;transform:scaleX(0.9853);">2010-01-03 16:48:16</span>
<span class="t" style="left:708.95px;top:792.90px;line-height:21px;font-size:14px;color:#333;font-weight:400;font-family:'Liberation Sans', sans-serif;transform:scaleX(0.9930);">Client Services Manager Appraisal</span>
<span class="t" style="left:1370.58px;top:792.90px;line-height:21px;font-size:14px;color:#333;font-weight:400;font-family:'Liberation Sans', sans-serif;transform:scaleX(0.9657);">0</span>
<span class="t" style="left:1712.65px;top:792.90px;line-height:21px;font-size:14px;color:#333;font-weight:400;font-family:'Liberation Sans', sans-serif;transform:scaleX(0.9853);">2010-01-10 16:16:07</span>
<span class="t" style="left:751.78px;top:816.90px;line-height:21px;font-size:14px;color:#333;font-weight:400;font-family:'Liberation Sans', sans-serif;transform:scaleX(0.9940);">Training Manager Appraisal</span>
<span class="t" style="left:1370.58px;top:816.90px;line-height:21px;font-size:14px;color:#333;font-weight:400;font-family:'Liberation Sans', sans-serif;transform:scaleX(0.9657);">0</span>
<span class="t" style="left:1712.65px;top:816.90px;line-height:21px;font-size:14px;color:#333;font-weight:400;font-family:'Liberation Sans', sans-serif;transform:scaleX(0.9853);">2010-01-10 16:15:36</span>
<div class="clip" style="left:384px;top:840px;width:1476px;height:7px;">
<span class="t" style="left:346.34px;top:0.90px;line-height:21px;font-size:14px;color:#333;font-weight:400;font-family:'Liberation Sans', sans-serif;transform:scaleX(1.0106);">Operations Manager Appraisal</span>
<span class="t" style="left:986.55px;top:0.90px;line-height:21px;font-size:14px;color:#333;font-weight:400;font-family:'Liberation Sans', sans-serif;transform:scaleX(1.0286);">0</span>
<span class="t" style="left:1328.65px;top:0.90px;line-height:21px;font-size:14px;color:#333;font-weight:400;font-family:'Liberation Sans', sans-serif;transform:scaleX(0.9885);">2010-01-10 16:14:51</span>
</div>
<div class="b" style="left:1845px;top:648px;width:14px;height:33px;background:#0067ab;border-radius:7px;"></div>
<svg class="b" style="left:1354px;top:626.3px;" width="19" height="25" viewBox="0 0 19 25"><path d="M5.4 14.4 V2.3 Q5.4 0.9 7 0.9 Q8.6 0.9 8.6 2.3 V6.6 Q10.2 5.6 11.6 6.8 Q13 5.8 14.6 7.2 Q16.4 6.4 17.4 8.4 V16.5 Q17.4 21 14.4 22.8 Q11.2 24.4 8.2 22.6 L1 15.4 Q0.2 14.2 1.4 13.4 Q2.8 12.8 5.4 14.4 Z" fill="#fff" stroke="#14141f" stroke-width="1.15" stroke-linejoin="round"/><path d="M8.6 6.6 V10.8 M11.6 6.9 V10.8 M14.6 7.3 V10.8" stroke="#14141f" stroke-width="1.1" fill="none"/></svg>
<div class="b" style="left:302px;top:857px;width:1576px;height:2px;background:#6e6e6e;"></div>
<div class="b" style="left:1129px;top:859px;width:155px;height:37px;background:#0079b1;border-radius:18.5px;"></div>
<span class="t" style="left:1145.00px;top:865.70px;line-height:24px;font-size:16px;color:#fff;font-weight:700;font-family:'Liberation Sans', sans-serif;transform:scaleX(0.9454);">View Your Report</span>
<div class="b" style="left:1287px;top:864px;width:249.29999999999995px;height:25px;background:#6bbde3;border-radius:3px;box-shadow:0 1px 1px rgba(0,0,0,.15);"></div>
<span class="t" style="left:1289.60px;top:865.90px;line-height:21px;font-size:14px;color:#333;font-weight:400;font-family:'Liberation Sans', sans-serif;transform:scaleX(0.9883);">Appraisal : Appraisal Name ( Token )</span>
<svg class="b" style="left:1519.9px;top:865.9px;" width="14" height="14" viewBox="0 0 14 14"><circle cx="7" cy="7" r="6.8" fill="#f2101c"/><rect x="3.6" y="6" width="6.8" height="2" rx="1" fill="#fff"/></svg>
<div class="b" style="left:1541.6px;top:864px;width:154.60000000000014px;height:25px;background:#6bbde3;border-radius:3px;box-shadow:0 1px 1px rgba(0,0,0,.15);"></div>
<span class="t" style="left:1545.40px;top:865.90px;line-height:21px;font-size:14px;color:#333;font-weight:400;font-family:'Liberation Sans', sans-serif;transform:scaleX(0.9649);">Appraisal : Creator ID</span>
<svg class="b" style="left:1680.3px;top:865.9px;" width="14" height="14" viewBox="0 0 14 14"><circle cx="7" cy="7" r="6.8" fill="#f2101c"/><rect x="3.6" y="6" width="6.8" height="2" rx="1" fill="#fff"/></svg>
<div class="b" style="left:1701.7px;top:864px;width:173.70000000000005px;height:25px;background:#6bbde3;border-radius:3px;box-shadow:0 1px 1px rgba(0,0,0,.15);"></div>
<span class="t" style="left:1705.00px;top:865.90px;line-height:21px;font-size:14px;color:#333;font-weight:400;font-family:'Liberation Sans', sans-serif;transform:scaleX(0.9724);">Appraisal : Date Created</span>
<svg class="b" style="left:1858.8px;top:865.9px;" width="14" height="14" viewBox="0 0 14 14"><circle cx="7" cy="7" r="6.8" fill="#f2101c"/><rect x="3.6" y="6" width="6.8" height="2" rx="1" fill="#fff"/></svg>
<span class="t" style="left:1838.70px;top:897.60px;line-height:21px;font-size:14px;color:#333;font-weight:400;font-family:'Liberation Sans', sans-serif;transform:scaleX(0.9940);">v18.0.0</span>
<svg class="b" style="left:0;top:0;" width="1920" height="919" viewBox="0 0 1920 919">
<defs><filter id="lsh" x="-40%" y="-40%" width="180%" height="180%"><feGaussianBlur in="SourceAlpha" stdDeviation="1.5"/><feOffset dx="1.5" dy="2.5"/><feComponentTransfer><feFuncA type="linear" slope="0.6"/></feComponentTransfer><feMerge><feMergeNode/><feMergeNode in="SourceGraphic"/></feMerge></filter></defs>
<g filter="url(#lsh)"><g transform="translate(243.70 144.00) scale(0.4569 0.4907)"><text x="0" y="0" font-family="'Liberation Sans',sans-serif" font-size="100" fill="#fff" stroke="#fff" stroke-width="18.15" stroke-linejoin="round" stroke-linecap="round">A</text><text x="0" y="0" font-family="'Liberation Sans',sans-serif" font-size="100" fill="#0b6bb4" stroke="#fff" stroke-width="0.74" stroke-linejoin="round">A</text></g></g>
<g filter="url(#lsh)"><g transform="translate(496.41 222.30) scale(0.4846 0.4964)"><text x="0" y="0" font-family="'Liberation Sans',sans-serif" font-size="100" fill="#fff" stroke="#fff" stroke-width="17.53" stroke-linejoin="round" stroke-linecap="round">B</text><text x="0" y="0" font-family="'Liberation Sans',sans-serif" font-size="100" fill="#0b6bb4" stroke="#fff" stroke-width="0.71" stroke-linejoin="round">B</text></g></g>
<g filter="url(#lsh)"><g transform="translate(632.67 514.60) scale(0.4761 0.5092)"><text x="0" y="0" font-family="'Liberation Sans',sans-serif" font-size="100" fill="#fff" stroke="#fff" stroke-width="17.46" stroke-linejoin="round" stroke-linecap="round">C</text><text x="0" y="0" font-family="'Liberation Sans',sans-serif" font-size="100" fill="#0b6bb4" stroke="#fff" stroke-width="0.71" stroke-linejoin="round">C</text></g></g>
<g filter="url(#lsh)"><g transform="translate(1828.31 132.30) scale(0.4857 0.4964)"><text x="0" y="0" font-family="'Liberation Sans',sans-serif" font-size="100" fill="#fff" stroke="#fff" stroke-width="17.51" stroke-linejoin="round" stroke-linecap="round">D</text><text x="0" y="0" font-family="'Liberation Sans',sans-serif" font-size="100" fill="#0b6bb4" stroke="#fff" stroke-width="0.71" stroke-linejoin="round">D</text></g></g>
<g filter="url(#lsh)"><g transform="translate(1727.71 436.70) scale(0.4590 0.5020)"><text x="0" y="0" font-family="'Liberation Sans',sans-serif" font-size="100" fill="#fff" stroke="#fff" stroke-width="17.90" stroke-linejoin="round" stroke-linecap="round">E</text><text x="0" y="0" font-family="'Liberation Sans',sans-serif" font-size="100" fill="#0b6bb4" stroke="#fff" stroke-width="0.73" stroke-linejoin="round">E</text></g></g>
<g filter="url(#lsh)"><g transform="translate(301.68 748.50) scale(0.4640 0.4992)"><text x="0" y="0" font-family="'Liberation Sans',sans-serif" font-size="100" fill="#fff" stroke="#fff" stroke-width="17.86" stroke-linejoin="round" stroke-linecap="round">F</text><text x="0" y="0" font-family="'Liberation Sans',sans-serif" font-size="100" fill="#0b6bb4" stroke="#fff" stroke-width="0.73" stroke-linejoin="round">F</text></g></g>
<g filter="url(#lsh)"><g transform="translate(552.63 852.50) scale(0.4846 0.5092)"><text x="0" y="0" font-family="'Liberation Sans',sans-serif" font-size="100" fill="#fff" stroke="#fff" stroke-width="17.31" stroke-linejoin="round" stroke-linecap="round">G</text><text x="0" y="0" font-family="'Liberation Sans',sans-serif" font-size="100" fill="#0b6bb4" stroke="#fff" stroke-width="0.70" stroke-linejoin="round">G</text></g></g>
</svg>
</main>
</body></html>
